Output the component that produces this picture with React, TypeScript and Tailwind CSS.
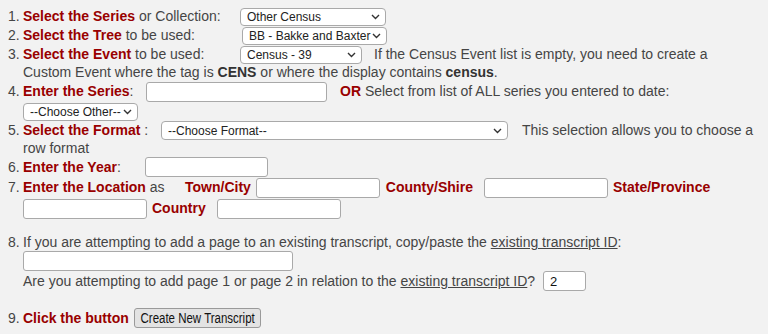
import React from "react";

const RED = "font-bold text-[#990000]";

function Sel({
  className,
  value,
}: {
  className: string;
  value: string;
}) {
  return (
    <div className={`relative shrink-0 ${className}`}>
      <select
        className="appearance-none w-full h-full bg-white border border-[#a9a9a9] rounded-[4px] pl-[6px] pr-[10px] text-[12px] leading-none text-[#222] outline-none"
        style={{ fontFamily: "'Liberation Sans', Arial, sans-serif" }}
        defaultValue={value}
      >
        <option>{value}</option>
      </select>
      <svg
        className="absolute right-[6px] top-1/2 -translate-y-1/2 pointer-events-none"
        width="9"
        height="6"
        viewBox="0 0 9 6"
      >
        <path d="M1 1l3.5 3.5L8 1" stroke="#333" strokeWidth="1.4" fill="none" />
      </svg>
    </div>
  );
}

function Inp({ className, value }: { className: string; value?: string }) {
  return (
    <input
      className={`shrink-0 bg-white border border-[#a9a9a9] rounded-[3px] px-[6px] text-[13px] text-[#111] outline-none ${className}`}
      defaultValue={value}
    />
  );
}

function Num({ n }: { n: string }) {
  return <span className="w-[15px] shrink-0">{n}</span>;
}

export default function App() {
  return (
    <div
      className="w-[768px] h-[334px] bg-[#f2f2f2] text-[#454545] text-[14px] leading-[17px] pl-[8px] pt-[7px] overflow-hidden"
      style={{ fontFamily: "'Liberation Sans', Arial, sans-serif" }}
    >
      {/* 1 */}
      <div className="flex items-center h-[19px]">
        <Num n="1." />
        <span className="w-[217px] shrink-0">
          <span className={RED}>Select the Series</span> or Collection:
        </span>
        <Sel className="w-[146px] h-[18px]" value="Other Census" />
      </div>
      {/* 2 */}
      <div className="flex items-center h-[19px]">
        <Num n="2." />
        <span className="w-[219px] shrink-0">
          <span className={RED}>Select the Tree</span> to be used:
        </span>
        <Sel className="w-[145px] h-[18px]" value="BB - Bakke and Baxter" />
      </div>
      {/* 3 */}
      <div className="flex items-center h-[19px]">
        <Num n="3." />
        <span className="w-[217px] shrink-0">
          <span className={RED}>Select the Event</span> to be used:
        </span>
        <Sel className="w-[122px] h-[18px]" value="Census - 39" />
        <span className="ml-[12px] whitespace-nowrap">
          If the Census Event list is empty, you need to create a
        </span>
      </div>
      <div className="flex items-center h-[17px] pl-[15px] whitespace-nowrap">
        Custom Event where the tag is&nbsp;<b className="text-[#333]">CENS</b>&nbsp;or where the display contains&nbsp;
        <b className="text-[#333]">census</b>.
      </div>
      {/* 4 */}
      <div className="flex items-center h-[21px]">
        <Num n="4." />
        <span className="w-[123px] shrink-0">
          <span className={RED}>Enter the Series</span>:
        </span>
        <Inp className="w-[181px] h-[20px]" />
        <span className="ml-[13px] whitespace-nowrap">
          <span className={RED}>OR</span> Select from list of ALL series you entered to date:
        </span>
      </div>
      <div className="flex items-center h-[19px] pl-[15px]">
        <Sel className="w-[115px] h-[18px]" value="--Choose Other--" />
      </div>
      {/* 5 */}
      <div className="flex items-center h-[19px]">
        <Num n="5." />
        <span className="w-[138px] shrink-0">
          <span className={RED}>Select the Format</span> :
        </span>
        <Sel className="w-[347px] h-[19px]" value="--Choose Format--" />
        <span className="ml-[14px] whitespace-nowrap">This selection allows you to choose a</span>
      </div>
      <div className="flex items-center h-[17px] pl-[15px]">row format</div>
      {/* 6 */}
      <div className="flex items-center h-[20px]">
        <Num n="6." />
        <span className="w-[122px] shrink-0">
          <span className={RED}>Enter the Year</span>:
        </span>
        <Inp className="w-[123px] h-[20px]" />
      </div>
      {/* 7 */}
      <div className="flex items-center h-[21px] whitespace-nowrap">
        <Num n="7." />
        <span className="w-[162px] shrink-0">
          <span className={RED}>Enter the Location</span> as
        </span>
        <span className={RED}>Town/City</span>
        <Inp className="ml-[5px] w-[124px] h-[20px]" />
        <span className={`ml-[6px] ${RED}`}>County/Shire</span>
        <Inp className="ml-[11px] w-[124px] h-[20px]" />
        <span className={`ml-[5px] ${RED}`}>State/Province</span>
      </div>
      <div className="flex items-center h-[21px] pl-[15px]">
        <Inp className="w-[124px] h-[20px]" />
        <span className={`ml-[5px] ${RED}`}>Country</span>
        <Inp className="ml-[11px] w-[124px] h-[20px]" />
      </div>
      <div className="h-[15px]" />
      {/* 8 */}
      <div className="flex items-center h-[17px] whitespace-nowrap">
        <Num n="8." />
        <span>
          If you are attempting to add a page to an existing transcript, copy/paste the{" "}
          <span className="underline">existing transcript ID</span>:
        </span>
      </div>
      <div className="flex items-center h-[20px] pl-[15px]">
        <Inp className="w-[270px] h-[20px]" />
      </div>
      <div className="flex items-center h-[20px] pl-[15px] whitespace-nowrap">
        <span>
          Are you attempting to add page 1 or page 2 in relation to the{" "}
          <span className="underline">existing transcript ID</span>?
        </span>
        <Inp className="ml-[8px] w-[43px] h-[20px]" value="2" />
      </div>
      <div className="h-[17px]" />
      {/* 9 */}
      <div className="flex items-center h-[20px]">
        <Num n="9." />
        <span className={RED}>Click the button</span>
        <button className="ml-[5px] w-[127px] h-[20px] flex items-center justify-center overflow-visible bg-[#e3e3e3] border border-[#9a9a9a] rounded-[3px] text-[#111] p-0">
          <span className="inline-block shrink-0 whitespace-nowrap text-[14px] leading-none scale-x-[0.82]">
            Create New Transcript
          </span>
        </button>
      </div>
    </div>
  );
}
